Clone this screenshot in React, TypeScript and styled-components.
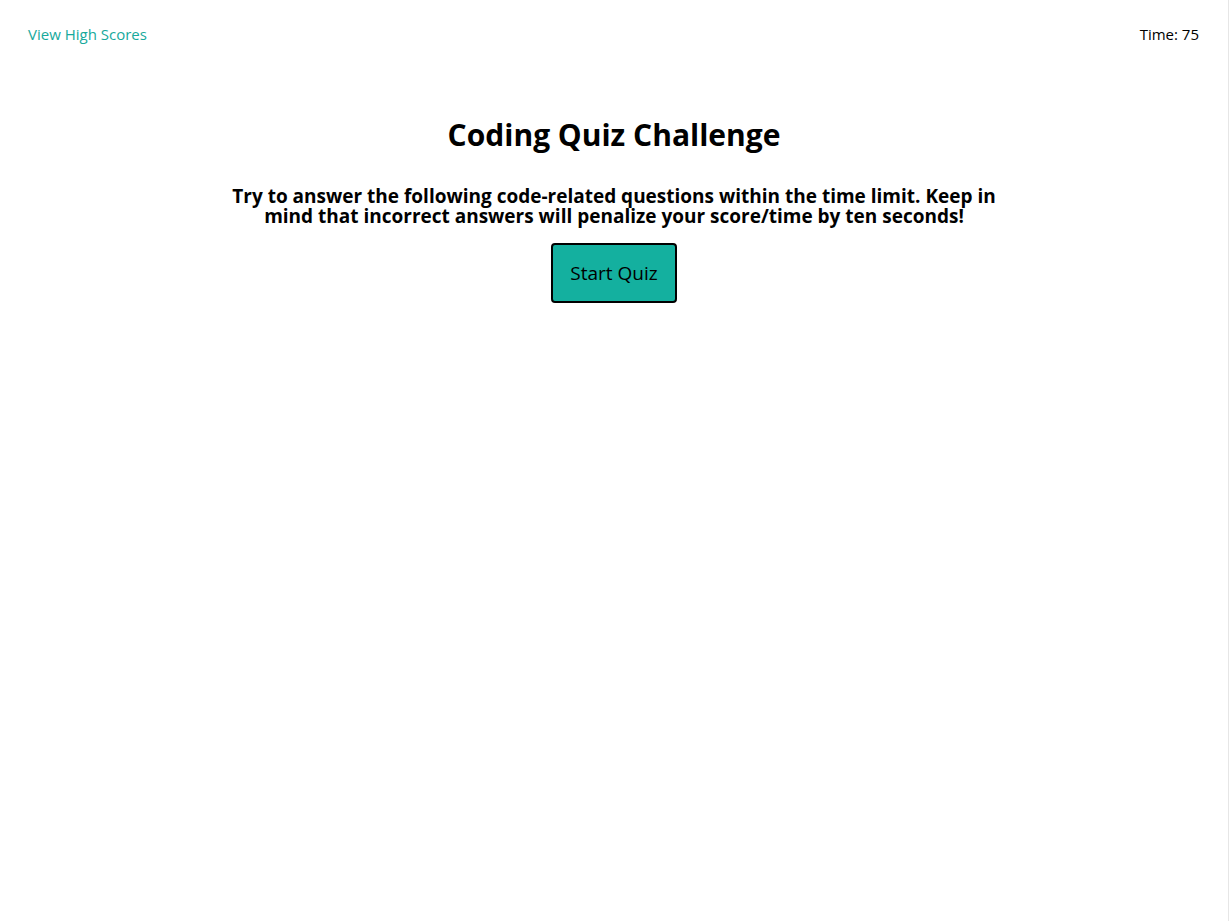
import React from 'react';
import styled, { createGlobalStyle } from 'styled-components';

const GlobalStyle = createGlobalStyle`
  html, body {
    margin: 0;
    padding: 0;
    background: #ffffff;
  }
  body {
    font-family: "Open Sans", "DejaVu Sans", sans-serif;
    color: #000000;
  }
`;

const Page = styled.div`
  min-height: 100vh;
  box-sizing: border-box;
  border-right: 1px solid #e6e6e6;
`;

const Header = styled.header`
  display: flex;
  justify-content: space-between;
  align-items: center;
  padding: 24px 29px 0 28px;
  font-size: 15px;
`;

const ScoresLink = styled.a`
  color: #17a99c;
  text-decoration: none;
  cursor: pointer;
`;

const Timer = styled.div`
  color: #000000;
`;

const Main = styled.main`
  display: flex;
  flex-direction: column;
  align-items: center;
  text-align: center;
  padding-top: 71px;
`;

const Title = styled.h1`
  margin: 0;
  font-size: 30px;
  font-weight: 700;
  line-height: 40px;
`;

const Intro = styled.p`
  margin: 31px 0 0;
  max-width: 790px;
  font-size: 19px;
  font-weight: 700;
  line-height: 20px;
`;

const StartButton = styled.button`
  margin-top: 17px;
  width: 126px;
  height: 60px;
  background: #14b09f;
  border: 2px solid #000000;
  border-radius: 4px;
  font-family: inherit;
  font-size: 19px;
  color: #000000;
  cursor: pointer;
`;

export default function App() {
  return (
    <>
      <GlobalStyle />
      <Page>
        <Header>
          <ScoresLink>View High Scores</ScoresLink>
          <Timer>Time: 75</Timer>
        </Header>
        <Main>
          <Title>Coding Quiz Challenge</Title>
          <Intro>
            Try to answer the following code-related questions within the time limit. Keep in mind that
            incorrect answers will penalize your score/time by ten seconds!
          </Intro>
          <StartButton>Start Quiz</StartButton>
        </Main>
      </Page>
    </>
  );
}
